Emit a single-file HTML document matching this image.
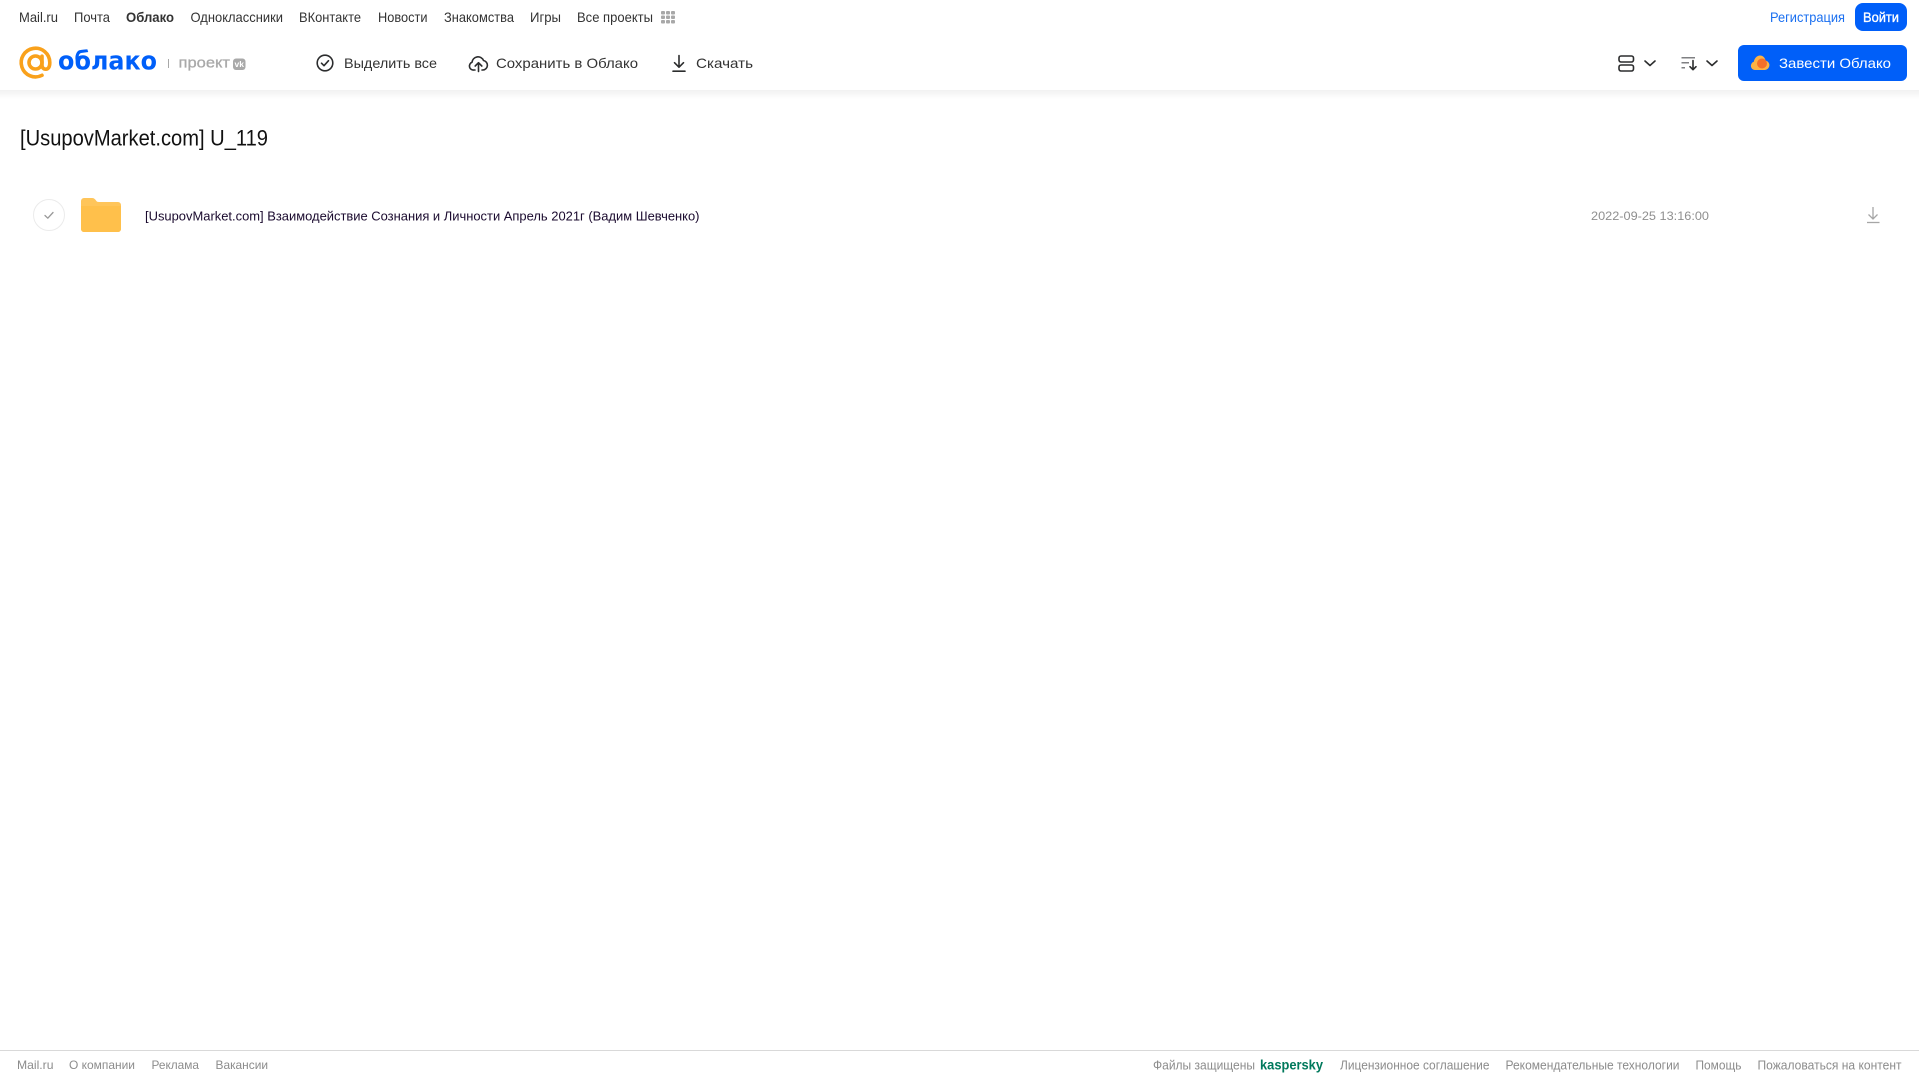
<!DOCTYPE html>
<html lang="ru">
<head>
<meta charset="utf-8">
<title>[UsupovMarket.com] U_119</title>
<style>
html,body{margin:0;padding:0;background:#fff;width:1919px;height:1079px;overflow:hidden}
svg{display:block;font-family:"Liberation Sans",sans-serif}
</style>
</head>
<body>
<svg xmlns="http://www.w3.org/2000/svg" width="1919" height="1079" viewBox="0 0 1919 1079">
<defs>
<linearGradient id="sh" x1="0" y1="0" x2="0" y2="1"><stop offset="0" stop-color="#f1f1f1"/><stop offset="1" stop-color="#fff"/></linearGradient>
</defs>
<rect width="1919" height="1079" fill="#fff"/>
<rect x="0" y="90" width="1919" height="9" fill="url(#sh)"/>

<!-- top nav -->
<g font-size="14" fill="#333">
<text x="19" y="22" textLength="39" lengthAdjust="spacingAndGlyphs">Mail.ru</text>
<text x="74" y="22" textLength="36" lengthAdjust="spacingAndGlyphs">Почта</text>
<text x="126" y="22" textLength="48" lengthAdjust="spacingAndGlyphs" font-weight="700" font-size="13.500">Облако</text>
<text x="190.500" y="22" textLength="92.500" lengthAdjust="spacingAndGlyphs">Одноклассники</text>
<text x="299" y="22" textLength="62" lengthAdjust="spacingAndGlyphs">ВКонтакте</text>
<text x="378" y="22" textLength="49.500" lengthAdjust="spacingAndGlyphs">Новости</text>
<text x="444" y="22" textLength="70" lengthAdjust="spacingAndGlyphs">Знакомства</text>
<text x="530" y="22" textLength="31" lengthAdjust="spacingAndGlyphs">Игры</text>
<text x="577" y="22" textLength="76" lengthAdjust="spacingAndGlyphs">Все проекты</text>
</g>
<g fill="#a8a8a8">
<rect x="661" y="11" width="4" height="3.500" rx="1"/><rect x="666" y="11" width="4" height="3.500" rx="1"/><rect x="671" y="11" width="4" height="3.500" rx="1"/>
<rect x="661" y="15.500" width="4" height="3.500" rx="1"/><rect x="666" y="15.500" width="4" height="3.500" rx="1"/><rect x="671" y="15.500" width="4" height="3.500" rx="1"/>
<rect x="661" y="20" width="4" height="3.500" rx="1"/><rect x="666" y="20" width="4" height="3.500" rx="1"/><rect x="671" y="20" width="4" height="3.500" rx="1"/>
</g>
<text x="1770" y="22" font-size="14" fill="#1a6ff0" textLength="75" lengthAdjust="spacingAndGlyphs">Регистрация</text>
<rect x="1855" y="3" width="52" height="28" rx="8" fill="#005ff9"/>
<text x="1863" y="22" font-size="14" fill="#fff" stroke="#fff" stroke-width="0.350" textLength="36" lengthAdjust="spacingAndGlyphs">Войти</text>

<!-- logo -->
<g fill="none" stroke="#f9a11b" stroke-width="3.600" stroke-linecap="round">
<circle cx="35.500" cy="62.500" r="6.500"/>
<path d="M42 75.300A14.300 14.300 0 1 1 49.800 62.500C49.800 67 48.200 69.200 45.800 69.200C43.400 69.200 42 67.500 42 65V56.200"/>
</g>
<text x="58" y="69.500" font-family="'DejaVu Sans',sans-serif" font-size="25.500" font-weight="700" fill="#005ff9" textLength="99" lengthAdjust="spacingAndGlyphs">облако</text>
<rect x="168" y="59" width="1" height="9" fill="#a8a8a8"/>
<text x="178.500" y="67.500" font-size="15" fill="#a9a9a9" stroke="#a9a9a9" stroke-width="0.300" textLength="51.500" lengthAdjust="spacingAndGlyphs">проект</text>
<rect x="233" y="58.500" width="12.500" height="11.500" rx="3" fill="#a9a9a9"/>
<text x="234.500" y="67" font-size="8" font-weight="700" fill="#fff" textLength="9.500" lengthAdjust="spacingAndGlyphs">vk</text>

<!-- toolbar -->
<g fill="none" stroke="#2c2d2e" stroke-width="1.600" stroke-linecap="round" stroke-linejoin="round">
<circle cx="325" cy="63" r="7.800"/>
<path d="M321.500 63.200L324 65.700L328.500 60.700"/>
<path d="M475 70H474A4 4 0 0 1 472 62.300A6 6 0 0 1 483.500 60.500A4.800 4.800 0 0 1 483 70H482"/>
<path d="M478.500 71.500V63M475.200 66L478.500 62.700L481.800 66"/>
<path d="M679 55.500V67M674.500 62.700L679 67.200L683.500 62.700M673 71.200H685"/>
</g>
<g font-size="14" fill="#333">
<text x="344" y="68" textLength="93" lengthAdjust="spacingAndGlyphs">Выделить все</text>
<text x="496" y="68" textLength="142" lengthAdjust="spacingAndGlyphs">Сохранить в Облако</text>
<text x="696" y="68" textLength="57" lengthAdjust="spacingAndGlyphs">Скачать</text>
</g>

<!-- view / sort -->
<g fill="none" stroke="#2c2d2e" stroke-width="1.600" stroke-linecap="round" stroke-linejoin="round">
<rect x="1619" y="56" width="14.500" height="6" rx="2"/>
<rect x="1619" y="65" width="14.500" height="6" rx="2"/>
<path d="M1645 61L1650 65.500L1655 61"/>
<path d="M1707 61L1712 65.500L1717 61"/>
<path d="M1693 60.500V69.500M1690 66.700L1693 69.700L1696 66.700"/>
</g>
<g fill="none" stroke="#55565a" stroke-width="1.200">
<path d="M1681.500 57.800H1695M1681.500 62.800H1689M1681.500 67.800H1685"/>
</g>
<rect x="1738" y="45" width="169" height="36" rx="6" fill="#005ff9"/>
<path d="M1755 70A4.200 4.200 0 0 1 1753.800 61.800C1754.500 58 1757 55.500 1760 55.500C1763 55.500 1765 57.800 1765.500 60.500A4.800 4.800 0 0 1 1765 70Z" fill="#fdb345"/>
<circle cx="1762" cy="63.500" r="5" fill="#f5702a"/>
<text x="1779" y="68" font-size="14" fill="#fff" textLength="112" lengthAdjust="spacingAndGlyphs">Завести Облако</text>

<!-- title -->
<text x="20" y="145.500" font-size="22" fill="#111" textLength="248" lengthAdjust="spacingAndGlyphs">[UsupovMarket.com] U_119</text>

<!-- row -->
<circle cx="49" cy="215" r="15.500" fill="#fff" stroke="#ebebeb" stroke-width="1"/>
<path d="M45 215.500L47.800 218.200L53 212.500" fill="none" stroke="#999" stroke-width="1.300" stroke-linecap="round" stroke-linejoin="round"/>
<path d="M81 201A3 3 0 0 1 84 198H92C94 198 95 199 96 200.500C96.800 201.700 97.500 202 99 202H118A3 3 0 0 1 121 205V229A3 3 0 0 1 118 232H84A3 3 0 0 1 81 229Z" fill="#ffc55a"/>
<path d="M81 206H121V229A3 3 0 0 1 118 232H84A3 3 0 0 1 81 229Z" fill="#ffc04b"/>
<text x="145" y="220.500" font-size="13" fill="#1a0a2e" textLength="554.500" lengthAdjust="spacingAndGlyphs">[UsupovMarket.com] Взаимодействие Сознания и Личности Апрель 2021г (Вадим Шевченко)</text>
<text x="1591" y="220" font-size="12" fill="#8f8f8f" textLength="118" lengthAdjust="spacingAndGlyphs">2022-09-25 13:16:00</text>
<g fill="none" stroke="#a6a6a6" stroke-width="1.300">
<path d="M1873 207V219M1868.500 214.500L1873 219L1877.500 214.500"/>
<path d="M1867 222.500H1879.500"/>
</g>

<!-- footer -->
<rect x="0" y="1050" width="1919" height="1" fill="#d9d9d9"/>
<g font-size="12" fill="#8c8c8c">
<text x="17" y="1069" textLength="36.500" lengthAdjust="spacingAndGlyphs">Mail.ru</text>
<text x="69" y="1069" textLength="66" lengthAdjust="spacingAndGlyphs">О компании</text>
<text x="151.500" y="1069" textLength="47.500" lengthAdjust="spacingAndGlyphs">Реклама</text>
<text x="215.500" y="1069" textLength="52.500" lengthAdjust="spacingAndGlyphs">Вакансии</text>
</g>
<g font-size="13" fill="#8c8c8c">
<text x="1153" y="1069.500" textLength="102" lengthAdjust="spacingAndGlyphs">Файлы защищены</text>
<text x="1340" y="1069.500" textLength="149.500" lengthAdjust="spacingAndGlyphs">Лицензионное соглашение</text>
<text x="1505.500" y="1069.500" textLength="174" lengthAdjust="spacingAndGlyphs">Рекомендательные технологии</text>
<text x="1695.500" y="1069.500" textLength="46" lengthAdjust="spacingAndGlyphs">Помощь</text>
<text x="1757.500" y="1069.500" textLength="144" lengthAdjust="spacingAndGlyphs">Пожаловаться на контент</text>
</g>
<text x="1260" y="1069.500" font-size="13.500" font-weight="700" fill="#00795c" textLength="63" lengthAdjust="spacingAndGlyphs">kaspersky</text>
</svg>
</body>
</html>
